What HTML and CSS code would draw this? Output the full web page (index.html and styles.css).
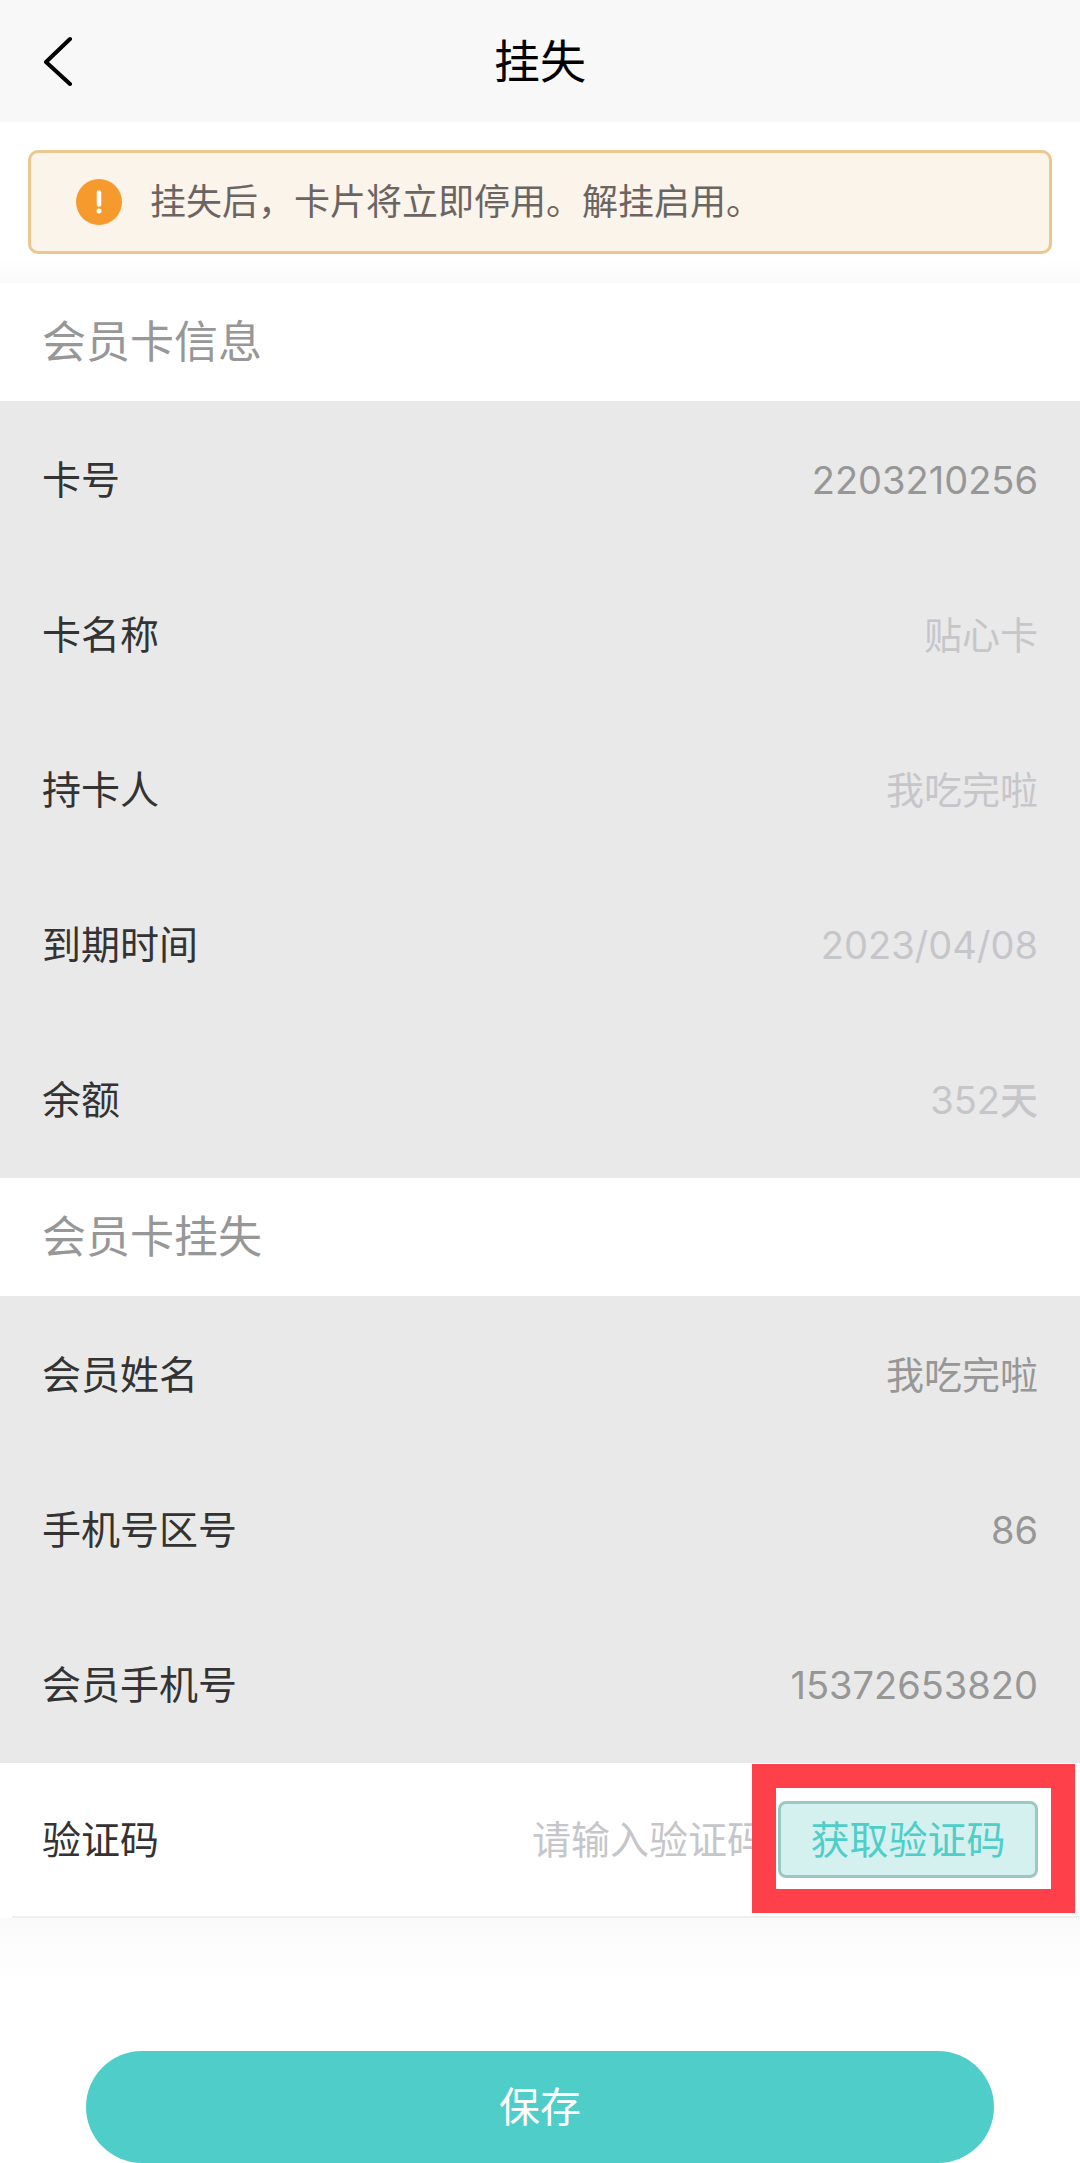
FILE: index.html
```html
<!DOCTYPE html>
<html lang="zh-CN">
<head>
    <meta charset="UTF-8">
    <meta name="viewport" content="width=device-width, initial-scale=1.0">
    <title>挂失</title>
    <link rel="stylesheet" href="styles.css">
</head>
<body>

    <header class="navbar">
        <button type="button" class="back" aria-label="返回">
            <svg width="32" height="50" viewBox="0 0 32 50" fill="none" stroke="#000" stroke-width="4" stroke-linecap="round" stroke-linejoin="round">
                <path d="M28 3 L4 26 L28 48"/>
            </svg>
        </button>
        <h1>挂失</h1>
    </header>

    <div class="notice-wrap">
        <div class="notice">
            <svg class="notice-icon" width="46" height="46" viewBox="0 0 46 46">
                <circle cx="23" cy="23" r="23" fill="#f79a2d"/>
                <path d="M23 13.5 V25.5" stroke="#fff" stroke-width="4.5" stroke-linecap="round"/>
                <circle cx="23" cy="32" r="2.5" fill="#fff"/>
            </svg>
            <span>挂失后，卡片将立即停用。解挂启用。</span>
        </div>
    </div>

    <form>
        <h2>会员卡信息</h2>
        <div class="group">
            <div class="row">
                <span>卡号</span>
                <span class="value">2203210256</span>
            </div>
            <div class="row">
                <span>卡名称</span>
                <span class="value light">贴心卡</span>
            </div>
            <div class="row">
                <span>持卡人</span>
                <span class="value light">我吃完啦</span>
            </div>
            <div class="row">
                <span>到期时间</span>
                <span class="value light">2023/04/08</span>
            </div>
            <div class="row">
                <span>余额</span>
                <span class="value light">352<b>天</b></span>
            </div>
        </div>

        <h2>会员卡挂失</h2>
        <div class="group">
            <div class="row">
                <span>会员姓名</span>
                <span class="value">我吃完啦</span>
            </div>
            <div class="row">
                <span>手机号区号</span>
                <span class="value">86</span>
            </div>
            <div class="row">
                <span>会员手机号</span>
                <span class="value">15372653820</span>
            </div>
        </div>

        <div class="row code-row">
            <label for="code">验证码</label>
            <input type="text" id="code" class="code-input" placeholder="请输入验证码">
            <div class="code-action">
                <button type="button" class="code-btn">获取验证码</button>
                <div class="highlight"></div>
            </div>
        </div>

        <div class="footer">
            <button type="submit" class="save-btn">保存</button>
        </div>
    </form>

</body>
</html>
```
FILE: styles.css
```css
* {
    box-sizing: border-box;
}

body {
    margin: 0;
    background-color: #fff;
    color: #333;
    font-family: Inter, "Noto Sans CJK SC", sans-serif;
    font-size: 39px;
    font-weight: 400;
    line-height: 1;
}

button, input {
    font: inherit;
}

h1, h2 {
    margin: 0;
    font-weight: 400;
}

.navbar {
    display: grid;
    grid-template-columns: 120px 1fr 120px;
    align-items: center;
    height: 122px;
    background-color: #f8f8f8;
}

.navbar h1 {
    color: #000;
    font-size: 46px;
    text-align: center;
}

.back {
    display: flex;
    padding: 0 0 0 42px;
    border: none;
    background: none;
}

.notice-wrap {
    padding: 28px 28px 29px;
    background: linear-gradient(#fff 85%, #fafafa);
}

.notice {
    display: flex;
    align-items: center;
    gap: 28px;
    height: 104px;
    padding: 0 45px;
    border: 3px solid #ecc88f;
    border-radius: 10px;
    background-color: #faf4eb;
    color: #6a6563;
    font-size: 36px;
}

h2 {
    padding: 0 42px;
    color: #979797;
    font-size: 44px;
    line-height: 118px;
}

.group {
    padding: 1px 0;
    background-color: #e9e9e9;
}

.row {
    display: flex;
    align-items: center;
    justify-content: space-between;
    height: 155px;
    padding: 0 42px;
}

.value {
    color: #979797;
    font-size: 38px;
}

.value.light {
    color: #c6c6ca;
}

.value b {
    font-weight: 500;
}

.code-row {
    margin-left: 12px;
    padding-left: 30px;
    border-bottom: 2px solid #eee;
}

.code-input {
    flex: 1;
    min-width: 0;
    margin-right: 12px;
    padding: 0;
    border: none;
    background: none;
    text-align: right;
}

.code-input::placeholder {
    color: #c6c6ca;
}

.code-action {
    position: relative;
}

.code-btn {
    display: block;
    width: 260px;
    height: 77px;
    padding: 0;
    border: 3px solid #9cc8c3;
    border-radius: 8px;
    background-color: #d4f1ef;
    color: #4fcdc8;
}

/* Red frame around the button */
.highlight {
    position: absolute;
    inset: -37px -37px -35px -26px;
    border: 24px solid #fd404a;
    pointer-events: none;
}

.footer {
    padding: 133px 86px 0;
    background: linear-gradient(#fafafa, #fff 70px);
}

.save-btn {
    display: block;
    width: 100%;
    height: 112px;
    border: none;
    border-radius: 56px;
    background-color: #4fcdc8;
    color: #fff;
    font-size: 41px;
}
```
